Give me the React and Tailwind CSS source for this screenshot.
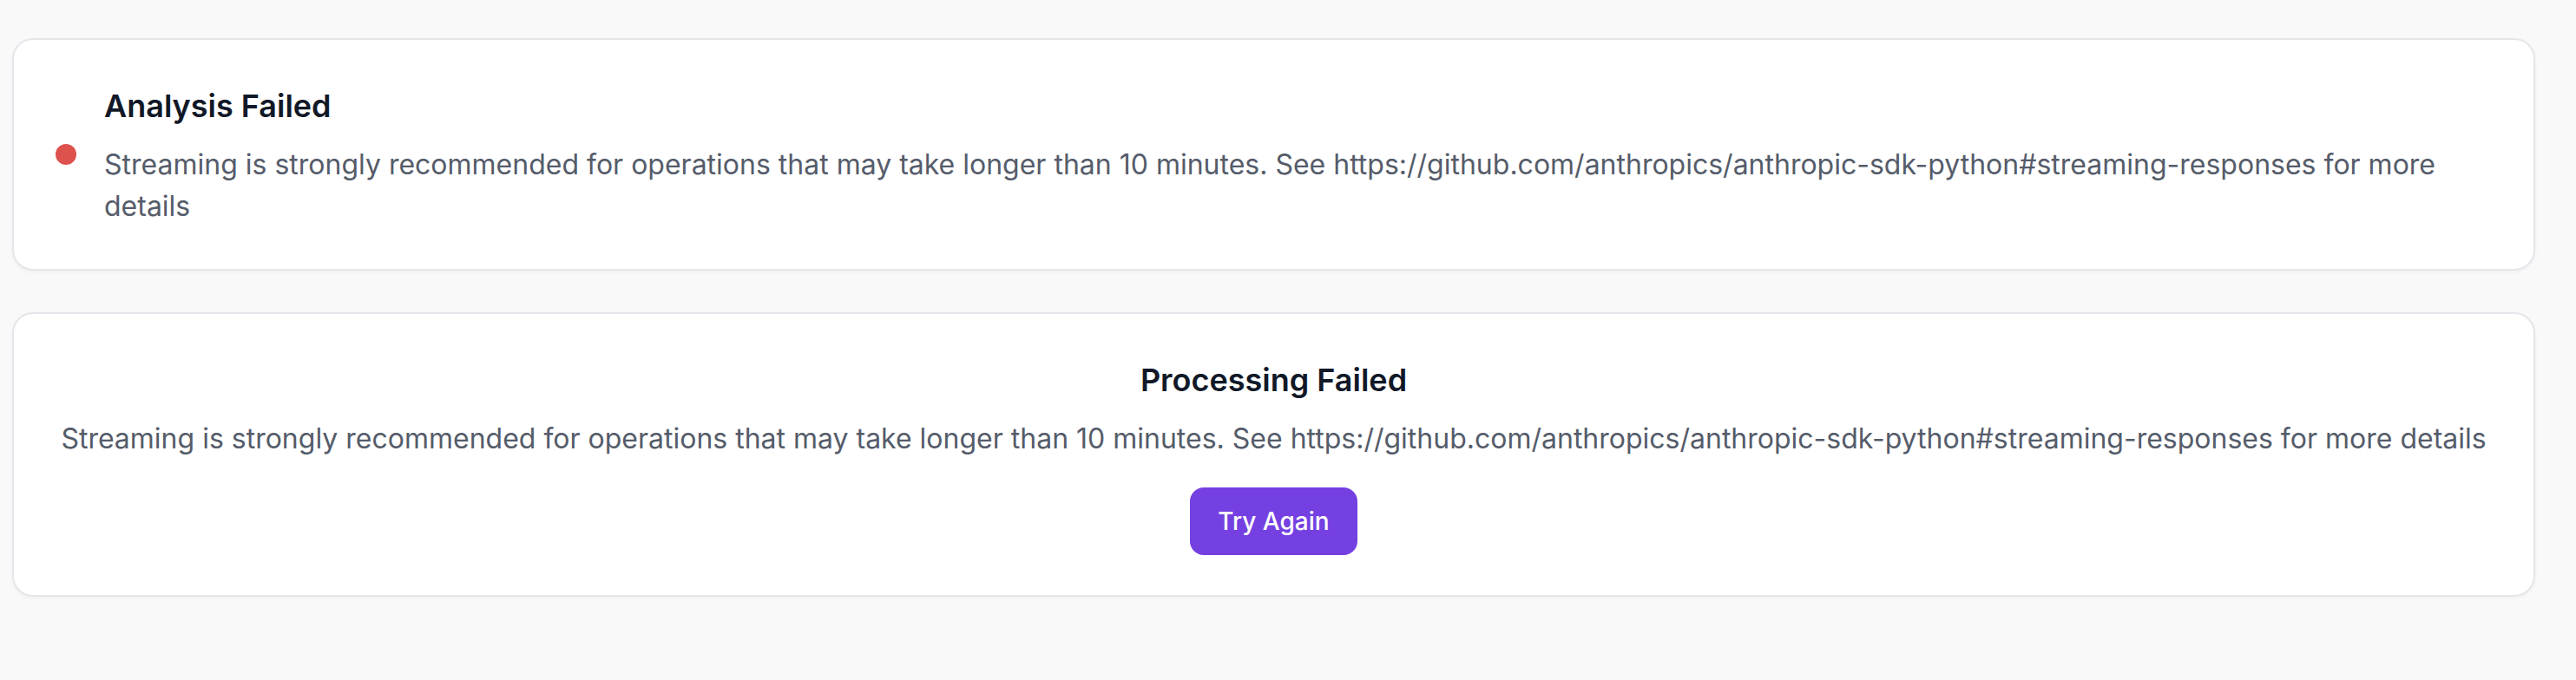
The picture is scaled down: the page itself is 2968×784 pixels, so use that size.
import React from 'react';

const body =
  'Streaming is strongly recommended for operations that may take longer than 10 minutes. See https://github.com/anthropics/anthropic-sdk-python#streaming-responses for more details';

function AnalysisCard() {
  return (
    <div className="flex items-center gap-[32px] p-[48px] bg-white border-2 border-[#e5e6eb] rounded-[24px] shadow-[0_2px_4px_rgba(0,0,0,0.04)]">
      <span className="shrink-0 w-[24px] h-[24px] rounded-full bg-[#de524e]" />
      <div className="min-w-0">
        <h3 className="text-[36px] leading-[56px] font-semibold text-[#111827]">Analysis Failed</h3>
        <p className="mt-[16px] text-[32px] leading-[48px] text-[#555c6a]">{body}</p>
      </div>
    </div>
  );
}

function ProcessingCard() {
  return (
    <div className="flex flex-col items-center text-center p-[48px] pb-[46px] bg-white border-2 border-[#e5e6eb] rounded-[24px] shadow-[0_2px_4px_rgba(0,0,0,0.04)]">
      <h3 className="text-[36px] leading-[56px] font-semibold text-[#111827]">Processing Failed</h3>
      <p className="mt-[16px] text-[32px] leading-[48px] text-[#555c6a]">{body}</p>
      <button className="mt-[32px] h-[78px] px-[32px] rounded-[16px] bg-[#7540e1] text-white text-[28px] leading-[40px] font-medium">
        Try Again
      </button>
    </div>
  );
}

export default function App() {
  return (
    <div
      className="min-h-screen bg-[#f9f9f9] pt-[44px] pl-[14px] pr-[47px] pb-[48px] flex flex-col gap-[48px]"
      style={{ fontFamily: 'Inter, "Noto Sans", sans-serif' }}
    >
      <AnalysisCard />
      <ProcessingCard />
    </div>
  );
}
